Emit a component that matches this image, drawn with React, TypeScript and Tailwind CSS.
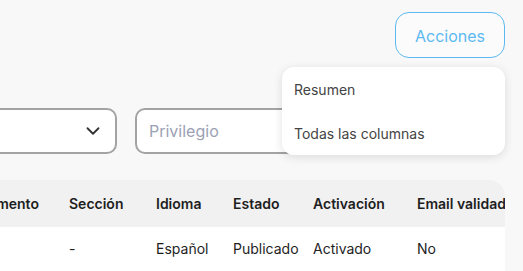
import { ChevronDown } from "lucide-react";

const columns = [
  { head: "Departamento", cell: "", w: "w-[127px]" },
  { head: "Sección", cell: "-", w: "w-[87px]" },
  { head: "Idioma", cell: "Español", w: "w-[77px]" },
  { head: "Estado", cell: "Publicado", w: "w-[80px]" },
  { head: "Activación", cell: "Activado", w: "w-[104px]" },
  { head: "Email validado", cell: "No", w: "w-[140px]" },
];

export default function App() {
  return (
    <div
      className="min-h-screen w-[523px] h-[271px] overflow-hidden bg-[#f8f8f8] text-[#222]"
      style={{ fontFamily: "Inter, 'Noto Sans', sans-serif" }}
    >
      {/* top action */}
      <div className="relative flex justify-end pt-[12px] pr-[18px]">
        <button className="h-[46px] w-[110px] rounded-[14px] border-[1.5px] border-[#5cb9f2] bg-white/40 pt-[1px] text-[16px] text-[#5cb9f2]">
          Acciones
        </button>
        <div className="absolute right-[18px] top-[67px] z-10 w-[223px] rounded-[12px] bg-white shadow-[0_2px_10px_rgba(0,0,0,0.12)]">
          <div className="flex h-[44px] items-center pl-[12px] text-[14px] text-[#444]">
            Resumen
          </div>
          <div className="flex h-[44px] items-center pl-[12px] text-[14px] text-[#444]">
            Todas las columnas
          </div>
        </div>
      </div>

      {/* filters */}
      <div className="mt-[50px] ml-[-83px] flex gap-[18px]">
        <div className="flex h-[46px] w-[200px] items-center justify-end rounded-[10px] border-2 border-[#a3a3a3] bg-white pr-[11px]">
          <ChevronDown size={22} strokeWidth={2} className="text-[#333]" />
        </div>
        <div className="flex h-[46px] w-[200px] items-center rounded-[10px] border-2 border-[#a3a3a3] bg-white pl-[12px] text-[16px] text-[#9ba1b4]">
          Privilegio
        </div>
      </div>

      {/* table */}
      <div className="mt-[26px] w-[505px] overflow-hidden rounded-tr-[16px]">
        <div className="ml-[-74px] flex h-[47px] w-max items-center bg-[#f1f1f1]">
          {columns.map((c) => (
            <div key={c.head} className={`${c.w} shrink-0 whitespace-nowrap pl-4 text-[14px] font-semibold text-[#1e1e1e]`}>
              {c.head}
            </div>
          ))}
        </div>
        <div className="ml-[-74px] flex h-[42px] w-max items-center bg-white">
          {columns.map((c) => (
            <div key={c.head} className={`${c.w} shrink-0 whitespace-nowrap pl-4 text-[14px] text-[#1e1e1e]`}>
              {c.cell}
            </div>
          ))}
        </div>
        <div className="ml-[-74px] h-[10px] w-[700px] bg-white" />
      </div>
    </div>
  );
}
